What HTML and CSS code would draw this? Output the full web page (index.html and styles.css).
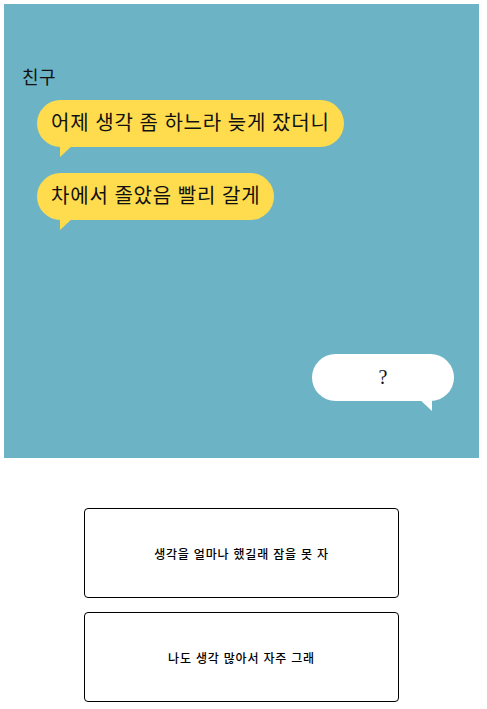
FILE: index.html
```html
<!DOCTYPE html>
<html lang="ko">
<head>
<meta charset="utf-8">
<title>대화</title>
<link rel="stylesheet" href="styles.css">
</head>
<body>
  <main class="page">
    <section class="chat">
      <div class="sender">친구</div>
      <div class="bubble bubble-friend">어제 생각 좀 하느라 늦게 잤더니</div>
      <div class="bubble bubble-friend">차에서 졸았음 빨리 갈게</div>
      <div class="bubble bubble-me">?</div>
    </section>
    <section class="choices">
      <button class="choice" type="button">생각을 얼마나 했길래 잠을 못 자</button>
      <button class="choice" type="button">나도 생각 많아서 자주 그래</button>
    </section>
  </main>
</body>
</html>
```
FILE: styles.css
```css
html, body {
  margin: 0;
  padding: 0;
  background: #ffffff;
}

body {
  font-family: "Liberation Serif", "Noto Sans CJK KR", serif;
  color: #111111;
}

.page {
  width: 475px;
  margin: 4px 0 0 4px;
}

/* chat window */
.chat {
  background: #6db3c6;
  height: 454px;
  box-sizing: border-box;
  padding: 62px 25px 0 17px;
  display: flex;
  flex-direction: column;
  align-items: flex-start;
}

.sender {
  font-size: 18px;
  line-height: 24px;
  margin-bottom: 10px;
  margin-left: 1px;
  letter-spacing: 0.5px;
}

.bubble {
  position: relative;
  height: 47px;
  box-sizing: border-box;
  border-radius: 24px;
  font-size: 20px;
  line-height: 47px;
  white-space: nowrap;
}

.bubble::after {
  content: "";
  position: absolute;
  top: 44px;
  width: 14px;
  height: 13px;
}

.bubble-friend {
  background: #fedc4e;
  margin-left: 16px;
  padding: 0 14px 0 14px;
  margin-bottom: 26px;
  letter-spacing: 0.8px;
}

.bubble-friend::after {
  left: 23px;
  background: #fedc4e;
  clip-path: polygon(0 0, 100% 0, 0 100%);
}

.bubble-me {
  background: #ffffff;
  align-self: flex-end;
  width: 142px;
  text-align: center;
  margin-top: 108px;
}

.bubble-me::after {
  right: 22px;
  background: #ffffff;
  clip-path: polygon(0 0, 100% 0, 100% 100%);
}

/* answer choices */
.choices {
  display: flex;
  flex-direction: column;
  align-items: center;
  gap: 14px;
  margin-top: 50px;
}

.choice {
  width: 315px;
  height: 90px;
  margin: 0;
  padding: 0;
  background: #ffffff;
  border: 1px solid #000000;
  border-radius: 4px;
  font-family: "Noto Sans CJK KR", sans-serif;
  font-size: 12px;
  font-weight: 500;
  letter-spacing: 0.8px;
  color: #000000;
}
```
